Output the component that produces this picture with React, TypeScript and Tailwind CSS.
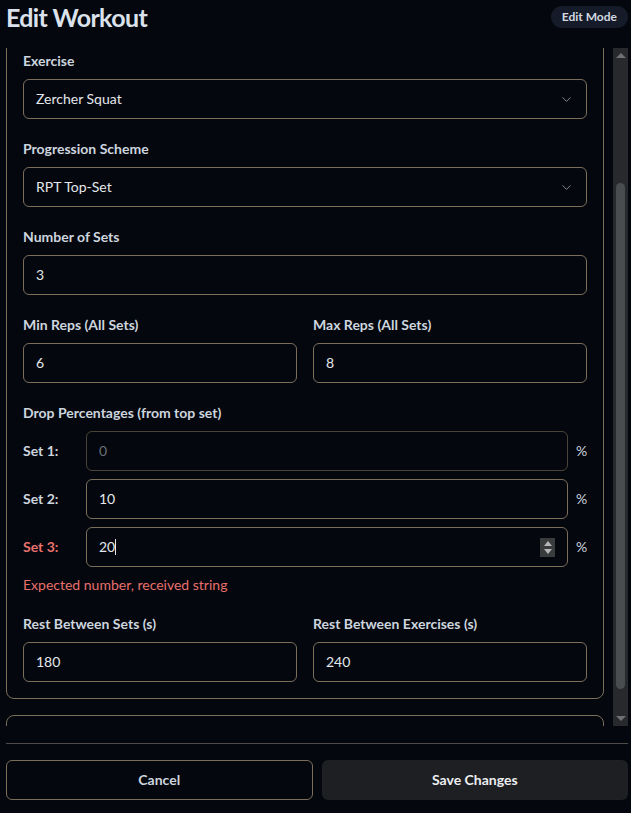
import { useLayoutEffect, useRef } from "react";
import { ChevronDown } from "lucide-react";

const FONT = { fontFamily: '"Lato", "Liberation Sans", sans-serif' };

function Label({ children, error }: { children: React.ReactNode; error?: boolean }) {
  return (
    <label
      className={`block text-sm font-bold leading-5 mb-2 ${error ? "text-[#e8706c]" : "text-[#cdd5df]"}`}
    >
      {children}
    </label>
  );
}

function SelectBox({ value }: { value: string }) {
  return (
    <div className="h-10 rounded-md border border-[#7b6f5b] px-3 flex items-center justify-between text-sm text-[#e4e7ec]">
      <span>{value}</span>
      <ChevronDown size={15} strokeWidth={1.5} className="text-[#8c9096]" />
    </div>
  );
}

function InputBox({ value, dim }: { value: string; dim?: boolean }) {
  return (
    <div
      className={`h-10 rounded-md border px-3 flex items-center text-sm ${
        dim ? "border-[#4a4438] text-[#6b7078]" : "border-[#7b6f5b] text-[#e4e7ec]"
      }`}
    >
      {value}
    </div>
  );
}

function Field({ label, children }: { label: string; children: React.ReactNode }) {
  return (
    <div>
      <Label>{label}</Label>
      {children}
    </div>
  );
}

function SetRow({ n, value, dim, error }: { n: number; value: string; dim?: boolean; error?: boolean }) {
  return (
    <div className="flex items-center gap-2">
      <span className={`w-[55px] text-sm font-bold ${error ? "text-[#e8706c]" : "text-[#cdd5df]"}`}>Set {n}:</span>
      {error ? (
        <div className="flex-1 h-10 rounded-md border border-[#7b6f5b] pl-3 pr-3 flex items-center justify-between text-sm text-[#e4e7ec]">
          <span className="flex items-center">
            {value}
            <span className="w-px h-4 bg-[#e4e7ec]" />
          </span>
          <span className="w-[15px] h-[19px] bg-[#3a3b3d] flex flex-col items-center justify-center gap-[3px]">
            <span className="w-0 h-0 border-x-[4px] border-x-transparent border-b-[5px] border-b-[#b4b6b8]" />
            <span className="w-0 h-0 border-x-[4px] border-x-transparent border-t-[5px] border-t-[#b4b6b8]" />
          </span>
        </div>
      ) : (
        <div className="flex-1">
          <InputBox value={value} dim={dim} />
        </div>
      )}
      <span className="w-[11px] text-sm text-[#cdd5df]">%</span>
    </div>
  );
}

function ExerciseCard({ exercise, scheme, sets, minReps, maxReps, drops, restSets, restEx, innerRef }: {
  exercise: string;
  scheme: string;
  sets: string;
  minReps: string;
  maxReps: string;
  drops: string[];
  restSets: string;
  restEx: string;
  innerRef?: React.Ref<HTMLDivElement>;
}) {
  return (
    <div ref={innerRef} className="rounded-lg border border-[#7b6f5b] p-4 flex flex-col gap-5">
      <Field label="Exercise">
        <SelectBox value={exercise} />
      </Field>
      <Field label="Progression Scheme">
        <SelectBox value={scheme} />
      </Field>
      <Field label="Number of Sets">
        <InputBox value={sets} />
      </Field>
      <div className="grid grid-cols-2 gap-4">
        <Field label="Min Reps (All Sets)">
          <InputBox value={minReps} />
        </Field>
        <Field label="Max Reps (All Sets)">
          <InputBox value={maxReps} />
        </Field>
      </div>
      <div>
        <Label>Drop Percentages (from top set)</Label>
        <div className="mt-[2px] flex flex-col gap-2">
          {drops.map((d, i) => (
            <SetRow key={i} n={i + 1} value={d} dim={i === 0} error={i === 2} />
          ))}
          <p className="text-sm leading-5 text-[#e8706c]">Expected number, received string</p>
        </div>
      </div>
      <div className="grid grid-cols-2 gap-4 -mt-[1px]">
        <Field label="Rest Between Sets (s)">
          <InputBox value={restSets} />
        </Field>
        <Field label="Rest Between Exercises (s)">
          <InputBox value={restEx} />
        </Field>
      </div>
    </div>
  );
}

export default function App() {
  const scrollRef = useRef<HTMLDivElement>(null);
  const cardRef = useRef<HTMLDivElement>(null);

  useLayoutEffect(() => {
    if (scrollRef.current && cardRef.current) {
      scrollRef.current.scrollTop = cardRef.current.offsetTop + 14;
    }
  }, []);

  return (
    <div style={FONT} className="w-[631px] h-[813px] bg-[#04070e] overflow-hidden pl-[6px] pr-[3px] flex flex-col">
      {/* ── header ── */}
      <header className="h-[34px] flex items-center justify-between">
        <h1 className="text-[25px] font-bold text-[#dbe2ec] tracking-tight leading-none">Edit Workout</h1>
        <span className="h-[22px] px-[11px] rounded-full bg-[#151b28] text-xs font-bold text-[#d3d8e0] flex items-center">
          Edit Mode
        </span>
      </header>

      {/* ── scroll area ── */}
      <div className="mt-[14px] h-[678px] flex gap-[9px]">
        <div ref={scrollRef} className="relative flex-1 overflow-hidden">
          <div className="flex flex-col gap-4">
            <Field label="Workout Name">
              <InputBox value="Lower Body A" />
            </Field>
            <p className="text-sm font-bold text-[#cdd5df]">Exercises</p>
            <ExerciseCard
              innerRef={cardRef}
              exercise="Zercher Squat"
              scheme="RPT Top-Set"
              sets="3"
              minReps="6"
              maxReps="8"
              drops={["0", "10", "20"]}
              restSets="180"
              restEx="240"
            />
            <ExerciseCard
              exercise="Romanian Deadlift"
              scheme="Double Progression"
              sets="3"
              minReps="8"
              maxReps="12"
              drops={["0", "10", "20"]}
              restSets="120"
              restEx="180"
            />
          </div>
        </div>

        {/* scrollbar */}
        <div className="w-[15px] bg-[#27292c] flex flex-col items-center">
          <span className="mt-[5px] w-0 h-0 border-x-[5px] border-x-transparent border-b-[5px] border-b-[#6e7073]" />
          <div className="mt-[125px] w-[9px] h-[506px] rounded-full bg-[#4a4d50]" />
          <span className="mt-auto mb-[5px] w-0 h-0 border-x-[5px] border-x-transparent border-t-[5px] border-t-[#6e7073]" />
        </div>
      </div>

      {/* ── footer ── */}
      <footer className="mt-[17px] border-t border-[#4f4b46] pt-4 grid grid-cols-2 gap-[9px]">
        <button className="h-10 rounded-md border border-[#7b6f5b] text-sm font-bold text-[#cdd5df]">Cancel</button>
        <button className="h-10 rounded-md bg-[#1e1f22] text-sm font-bold text-[#eceef1]">Save Changes</button>
      </footer>
    </div>
  );
}
